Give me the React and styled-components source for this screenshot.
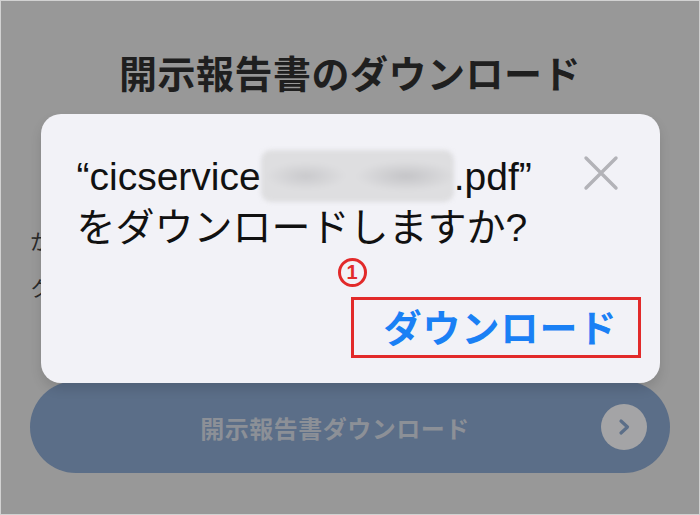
import React from "react";
import styled, { createGlobalStyle } from "styled-components";

const Global = createGlobalStyle`
  html, body { margin: 0; padding: 0; background: #989898; }
  body { font-family: "Liberation Sans", "Noto Sans CJK JP", sans-serif; }
  * { box-sizing: border-box; }
`;

const Frame = styled.div`
  position: relative;
  width: 700px;
  height: 515px;
  overflow: hidden;
  border: 1px solid #d2d2d2;
  background: #989898;
`;

const Page = styled.div`
  display: flex;
  flex-direction: column;
  padding: 48px 29px 0;
`;

const Title = styled.h1`
  margin: 0;
  text-align: center;
  font-family: "Noto Sans CJK JP", sans-serif;
  font-size: 38px;
  font-weight: 700;
  line-height: 46px;
  color: #1f1f1f;
  letter-spacing: 0.5px;
`;

const Para = styled.p`
  margin: 122px 0 0;
  font-family: "Noto Sans CJK JP", sans-serif;
  font-size: 21px;
  line-height: 47px;
  color: #2a2a2a;
  white-space: nowrap;
`;

const Pill = styled.div`
  margin-top: 70px;
  height: 92px;
  border-radius: 46px;
  background: #5b6e88;
  display: flex;
  align-items: center;
  justify-content: center;
  position: relative;
`;

const PillLabel = styled.span`
  font-family: "Noto Sans CJK JP", sans-serif;
  font-size: 24px;
  font-weight: 700;
  color: #8c9097;
  letter-spacing: 0.5px;
  margin-left: -30px;
`;

const Chevron = styled.span`
  position: absolute;
  right: 23px;
  top: 50%;
  transform: translateY(-50%);
  width: 46px;
  height: 46px;
  border-radius: 50%;
  background: #a4a4a6;
  display: flex;
  align-items: center;
  justify-content: center;
`;

const Overlay = styled.div`
  position: absolute;
  inset: 0;
  display: flex;
  justify-content: center;
  align-items: flex-start;
  padding-top: 113px;
`;

const Dialog = styled.div`
  width: 619px;
  height: 269px;
  background: #f2f2f7;
  border-radius: 20px;
  box-shadow: 0 6px 12px rgba(0, 0, 0, 0.12);
  display: flex;
  flex-direction: column;
  padding: 37px 19px 0 36px;
`;

const Header = styled.div`
  display: flex;
  align-items: flex-start;
  justify-content: space-between;
`;

const Message = styled.div`
  font-family: "Liberation Sans", "Noto Sans CJK JP", sans-serif;
  font-size: 39px;
  line-height: 51px;
  color: #111;
  white-space: nowrap;
`;

const Redacted = styled.span`
  display: inline-block;
  vertical-align: middle;
  width: 193px;
  height: 52px;
  margin-top: -8px;
  background:
    radial-gradient(ellipse 40px 14px at 45px 26px, #c9c9cc 0%, rgba(210,210,212,0) 100%),
    radial-gradient(ellipse 50px 15px at 145px 26px, #c4c4c7 0%, rgba(210,210,212,0) 100%),
    #dedee0;
  border-radius: 10px;
  filter: blur(2px);
`;

const CloseBtn = styled.button`
  border: none;
  background: none;
  padding: 0;
  margin: 4px 22px 0 0;
  width: 36px;
  height: 36px;
  display: flex;
  cursor: pointer;
`;

const Actions = styled.div`
  margin-top: 44px;
  display: flex;
  justify-content: flex-end;
`;

const ActionWrap = styled.div`
  position: relative;
`;

const DownloadButton = styled.button`
  width: 290px;
  height: 61px;
  border: 3px solid #e22a2a;
  background: transparent;
  font-family: "Noto Sans CJK JP", sans-serif;
  font-size: 38px;
  font-weight: 700;
  color: #1a80f5;
  display: flex;
  align-items: center;
  justify-content: flex-end;
  padding: 0 20px 4px 0;
  letter-spacing: 1px;
  cursor: pointer;
`;

const Badge = styled.span`
  position: absolute;
  left: -13px;
  top: -39px;
  width: 29px;
  height: 29px;
  border: 3px solid #e22a2a;
  border-radius: 50%;
  background: #f2f2f7;
  color: #e22a2a;
  font-family: "Liberation Sans", sans-serif;
  font-weight: 700;
  font-size: 20px;
  line-height: 23px;
  text-align: center;
`;

export default function App() {
  return (
    <>
      <Global />
      <Frame>
        <Page>
          <Title>開示報告書のダウンロード</Title>
          <Para>
            かんたんな手続きで開示報告書をダウンロードできます。
            <br />
            クレジット情報の内容をご確認ください。
          </Para>
          <Pill>
            <PillLabel>開示報告書ダウンロード</PillLabel>
            <Chevron>
              <svg width="22" height="22" viewBox="0 0 22 22">
                <path d="M8 5 L14.5 11 L8 17" fill="none" stroke="#5b6e88" strokeWidth="3.2" strokeLinecap="round" strokeLinejoin="round" />
              </svg>
            </Chevron>
          </Pill>
        </Page>
        <Overlay>
          <Dialog>
            <Header>
              <Message>
                “cicservice<Redacted />.pdf”
                <br />
                をダウンロードしますか?
              </Message>
              <CloseBtn aria-label="閉じる">
                <svg width="36" height="36" viewBox="0 0 36 36">
                  <path d="M3 3 L33 33 M33 3 L3 33" stroke="#b3b3b8" strokeWidth="3.4" strokeLinecap="round" />
                </svg>
              </CloseBtn>
            </Header>
            <Actions>
              <ActionWrap>
                <Badge>1</Badge>
                <DownloadButton>ダウンロード</DownloadButton>
              </ActionWrap>
            </Actions>
          </Dialog>
        </Overlay>
      </Frame>
    </>
  );
}
